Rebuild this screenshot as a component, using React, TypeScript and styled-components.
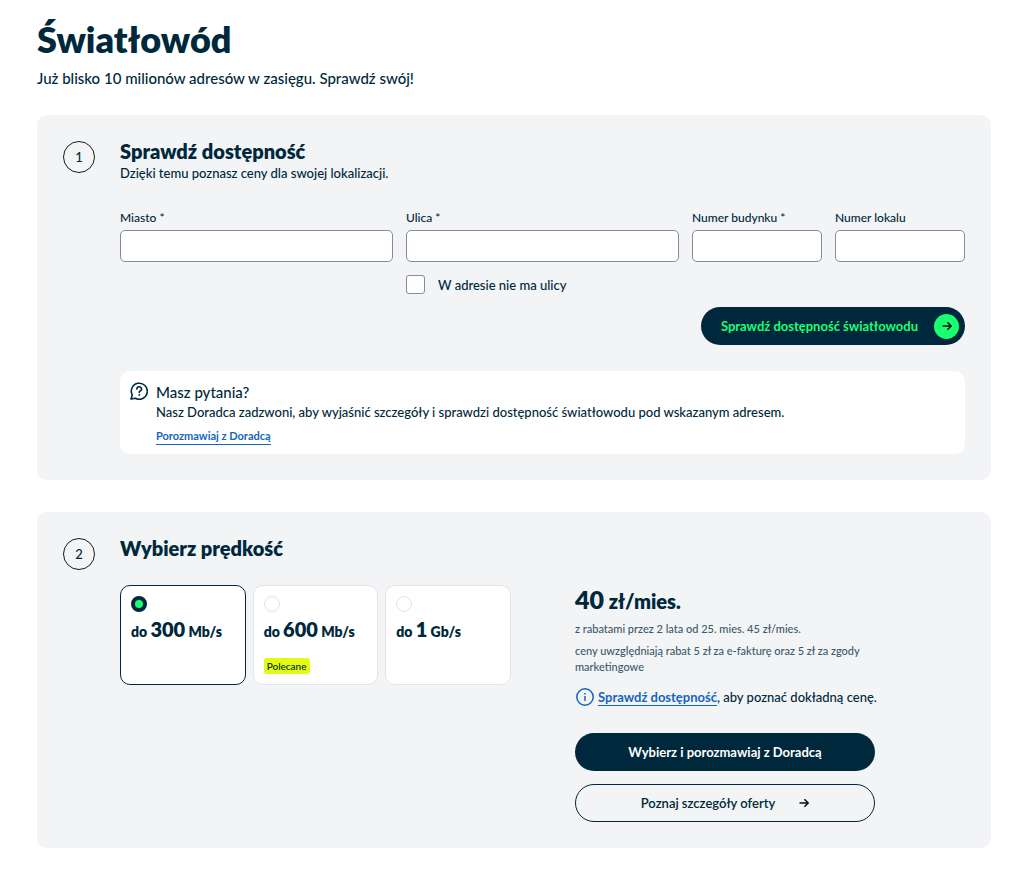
import React, { useState } from "react";
import styled, { createGlobalStyle, css } from "styled-components";

const color = {
  navy: "#00283c",
  ink: "#001e2f",
  muted: "#40596a",
  panel: "#f2f4f6",
  green: "#1aff72",
  yellow: "#e2fa14",
  blue: "#1565c0",
  field: "#868b99",
  line: "#e2e4e8",
};

const GlobalStyle = createGlobalStyle`
  *, *::before, *::after { box-sizing: border-box; }
  body {
    margin: 0;
    background: #fff;
    color: ${color.navy};
    font-family: Lato, "Noto Sans", sans-serif;
    font-size: 13px;
    line-height: 20px;
    font-weight: 500;
  }
  h1, h2, h3, p { margin: 0; }
  button, input { font: inherit; }
`;

const Page = styled.main`
  padding: 17px 31px 22px 37px;
`;

const PageTitle = styled.h1`
  font-size: 36px;
  line-height: 44px;
  font-weight: 800;
`;

const Lead = styled.p`
  margin: 6px 0 26px;
  font-size: 15px;
  line-height: 22px;
  font-weight: 500;
`;

const Step = styled.section`
  display: flex;
  gap: 25px;
  padding: 26px;
  border-radius: 10px;
  background: ${color.panel};

  & + & {
    margin-top: 32px;
  }
`;

const StepNumber = styled.span`
  flex: none;
  display: flex;
  align-items: center;
  justify-content: center;
  width: 32px;
  height: 32px;
  border: 1px solid #1a1a1a;
  border-radius: 50%;
  font-weight: 500;
`;

const StepBody = styled.div`
  flex: 1;
  min-width: 0;
`;

const StepTitle = styled.h2`
  padding-bottom: 2px;
  font-size: 20px;
  line-height: 20px;
  font-weight: 800;
`;

const AddressForm = styled.form`
  display: grid;
  grid-template-columns: repeat(6, 1fr);
  column-gap: 13px;
  margin-top: 26px;
`;

const Field = styled.div<{ $span: number }>`
  grid-column: span ${(p) => p.$span};
  display: flex;
  flex-direction: column;
  gap: 3px;
`;

const FieldLabel = styled.label`
  font-size: 12px;
  line-height: 18px;
  font-weight: 500;
`;

const TextInput = styled.input`
  width: 100%;
  height: 32px;
  padding: 0 12px;
  border: 1px solid ${color.field};
  border-radius: 5px;
  background: #fff;
  color: inherit;
`;

const CheckRow = styled.label`
  grid-column: 3 / -1;
  display: flex;
  align-items: flex-start;
  gap: 13px;
  margin-top: 13px;
`;

const Checkbox = styled.input`
  appearance: none;
  width: 19px;
  height: 19px;
  margin: 0;
  border: 1px solid ${color.field};
  border-radius: 3px;
  background: #fff;

  &:checked {
    background: ${color.navy};
  }
`;

const pill = css`
  display: flex;
  align-items: center;
  justify-content: center;
  height: 38px;
  border-radius: 19px;
  cursor: pointer;
`;

const CheckButton = styled.button`
  ${pill}
  grid-column: 1 / -1;
  justify-self: end;
  gap: 16px;
  margin-top: 12px;
  padding: 0 6px 0 20px;
  border: 0;
  background: ${color.navy};
  color: ${color.green};
  font-weight: 700;
`;

const ArrowBadge = styled.span`
  display: flex;
  align-items: center;
  justify-content: center;
  width: 25px;
  height: 25px;
  border-radius: 50%;
  background: ${color.green};
`;

const HelpBox = styled.aside`
  display: flex;
  gap: 8px;
  margin-top: 26px;
  padding: 11px 10px 9px;
  border-radius: 10px;
  background: #fff;
`;

const HelpTitle = styled.h3`
  font-size: 15px;
  line-height: 20px;
  font-weight: 500;
`;

const TextLink = styled.a<{ $small?: boolean }>`
  display: inline-block;
  border-bottom: 1px solid currentColor;
  color: ${color.blue};
  font-size: ${(p) => (p.$small ? 11 : 13)}px;
  line-height: 16px;
  font-weight: 700;
  text-decoration: none;
`;

const HelpLink = styled.div`
  display: flex;
  margin-top: 6px;
`;

const Offer = styled.div`
  display: grid;
  grid-template-columns: 1fr 1fr;
  gap: 13px;
  margin-top: 25px;
`;

const SpeedList = styled.div`
  display: grid;
  grid-template-columns: repeat(3, 1fr);
  gap: 7px;
  align-items: start;
  padding-right: 25px;
`;

const SpeedCard = styled.label<{ $active: boolean }>`
  display: flex;
  flex-direction: column;
  align-items: flex-start;
  height: 100px;
  padding: 10px;
  border: 1px solid ${(p) => (p.$active ? color.navy : color.line)};
  border-radius: 10px;
  background: #fff;
  cursor: pointer;
`;

const Radio = styled.input`
  appearance: none;
  width: 16px;
  height: 16px;
  margin: 0;
  border: 1px solid ${color.line};
  border-radius: 50%;
  background: #fff;

  &:checked {
    border: 4px solid ${color.navy};
    background: ${color.green};
  }
`;

const SpeedText = styled.span`
  margin-top: 5px;
  font-size: 14px;
  line-height: 24px;
  font-weight: 800;
  white-space: nowrap;
`;

const SpeedValue = styled.strong`
  font-size: 20px;
  font-weight: 800;
`;

const Tag = styled.span`
  margin-top: auto;
  padding: 0 3px;
  border-radius: 3px;
  background: ${color.yellow};
  color: ${color.ink};
  font-size: 10px;
  line-height: 16px;
  font-weight: 500;
`;

const Summary = styled.div`
  padding-left: 26px;
`;

const Price = styled.p`
  font-size: 20px;
  line-height: 28px;
  font-weight: 800;
`;

const PriceValue = styled.strong`
  font-size: 25px;
  font-weight: 800;
`;

const Note = styled.p`
  max-width: 300px;
  margin-top: 6px;
  color: ${color.muted};
  font-size: 11px;
  line-height: 16px;
`;

const InfoRow = styled.div`
  display: flex;
  align-items: center;
  gap: 3px;
  margin: 12px 0 26px;
  white-space: nowrap;
`;

const Actions = styled.div`
  display: flex;
  flex-direction: column;
  gap: 13px;
  max-width: 300px;
`;

const PrimaryButton = styled.button`
  ${pill}
  border: 0;
  background: ${color.navy};
  color: #fff;
  font-weight: 700;
`;

const OutlineButton = styled.button`
  ${pill}
  gap: 24px;
  border: 1px solid ${color.navy};
  background: transparent;
  color: ${color.navy};
  font-weight: 600;
`;

const Arrow = () => (
  <svg width="10" height="10" viewBox="0 0 10 10" fill="none" stroke="#001018" strokeWidth="1.5" aria-hidden="true">
    <path d="M0.5 5H9M5.4 1.2L9.2 5L5.4 8.8" />
  </svg>
);

const QuestionBubble = styled.svg`
  flex: none;
  width: 18px;
  height: 18px;
`;

const fields = [
  { id: "city", label: "Miasto *", span: 2 },
  { id: "street", label: "Ulica *", span: 2 },
  { id: "building", label: "Numer budynku *", span: 1 },
  { id: "flat", label: "Numer lokalu", span: 1 },
];

const speeds = [
  { id: "300", value: "300", unit: "Mb/s" },
  { id: "600", value: "600", unit: "Mb/s", tag: "Polecane" },
  { id: "1000", value: "1", unit: "Gb/s" },
];

export default function App() {
  const [speed, setSpeed] = useState("300");

  return (
    <>
      <GlobalStyle />
      <Page>
        <PageTitle>Światłowód</PageTitle>
        <Lead>Już blisko 10 milionów adresów w zasięgu. Sprawdź swój!</Lead>

        <Step>
          <StepNumber>1</StepNumber>
          <StepBody>
            <StepTitle>Sprawdź dostępność</StepTitle>
            <p>Dzięki temu poznasz ceny dla swojej lokalizacji.</p>
            <AddressForm onSubmit={(e) => e.preventDefault()}>
              {fields.map((f) => (
                <Field key={f.id} $span={f.span}>
                  <FieldLabel htmlFor={f.id}>{f.label}</FieldLabel>
                  <TextInput id={f.id} type="text" />
                </Field>
              ))}
              <CheckRow>
                <Checkbox type="checkbox" />
                W adresie nie ma ulicy
              </CheckRow>
              <CheckButton type="submit">
                Sprawdź dostępność światłowodu
                <ArrowBadge>
                  <Arrow />
                </ArrowBadge>
              </CheckButton>
            </AddressForm>
            <HelpBox>
              <QuestionBubble viewBox="0 0 18 18" fill="none" stroke={color.navy} strokeWidth="1.6" strokeLinecap="round" strokeLinejoin="round" aria-hidden="true">
                <path d="M1 17L2.3 13.1A8 8 0 1 1 5.4 16.2Z" />
                <path d="M6.9 7.1A2.3 2.3 0 1 1 10.2 9.1C9.5 9.4 9.2 9.7 9.2 10.4" />
                <circle cx="9.2" cy="12.9" r="0.5" fill={color.navy} strokeWidth="0.8" />
              </QuestionBubble>
              <div>
                <HelpTitle>Masz pytania?</HelpTitle>
                <p>Nasz Doradca zadzwoni, aby wyjaśnić szczegóły i sprawdzi dostępność światłowodu pod wskazanym adresem.</p>
                <HelpLink>
                  <TextLink $small href="#doradca">Porozmawiaj z Doradcą</TextLink>
                </HelpLink>
              </div>
            </HelpBox>
          </StepBody>
        </Step>

        <Step>
          <StepNumber>2</StepNumber>
          <StepBody>
            <StepTitle>Wybierz prędkość</StepTitle>
            <Offer>
              <SpeedList role="radiogroup" aria-label="Wybierz prędkość">
                {speeds.map((s) => (
                  <SpeedCard key={s.id} $active={speed === s.id}>
                    <Radio type="radio" name="speed" checked={speed === s.id} onChange={() => setSpeed(s.id)} />
                    <SpeedText>
                      do <SpeedValue>{s.value}</SpeedValue> {s.unit}
                    </SpeedText>
                    {s.tag && <Tag>{s.tag}</Tag>}
                  </SpeedCard>
                ))}
              </SpeedList>
              <Summary>
                <Price>
                  <PriceValue>40</PriceValue> zł/mies.
                </Price>
                <Note>z rabatami przez 2 lata od 25. mies. 45 zł/mies.</Note>
                <Note>ceny uwzględniają rabat 5 zł za e-fakturę oraz 5 zł za zgody marketingowe</Note>
                <InfoRow>
                  <svg width="20" height="20" viewBox="0 0 20 20" fill="none" stroke={color.blue} strokeWidth="1.5" aria-hidden="true">
                    <circle cx="10" cy="10" r="8.2" />
                    <path d="M10 9V14M10 6V7.4" />
                  </svg>
                  <span>
                    <TextLink href="#dostepnosc">Sprawdź dostępność</TextLink>, aby poznać dokładną cenę.
                  </span>
                </InfoRow>
                <Actions>
                  <PrimaryButton type="button">Wybierz i porozmawiaj z Doradcą</PrimaryButton>
                  <OutlineButton type="button">
                    Poznaj szczegóły oferty
                    <Arrow />
                  </OutlineButton>
                </Actions>
              </Summary>
            </Offer>
          </StepBody>
        </Step>
      </Page>
    </>
  );
}
